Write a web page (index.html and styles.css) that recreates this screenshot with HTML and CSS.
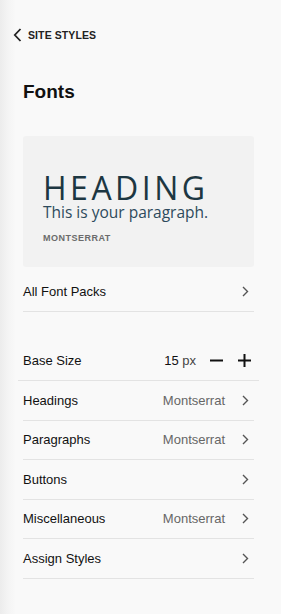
FILE: index.html
```html
<!DOCTYPE html>
<html>
<head>
<meta charset="utf-8">
<link rel="stylesheet" href="styles.css">
</head>
<body>
<div class="panel">
  <div class="back">
    <svg class="back-icon" width="9" height="14" viewBox="0 0 9 14"><path d="M7.5 1 L1.8 7 L7.5 13" fill="none" stroke="#222" stroke-width="1.8"/></svg>
    <span>SITE STYLES</span>
  </div>
  <h1 class="title">Fonts</h1>
  <div class="preview">
    <div class="pv-heading">HEADING</div>
    <div class="pv-para">This is your paragraph.</div>
    <div class="pv-label">MONTSERRAT</div>
  </div>
  <div class="row packs-row">
    <span class="label">All Font Packs</span>
    <span class="right"><svg class="chev" width="7" height="11" viewBox="0 0 7 11"><path d="M1 1 L5.5 5.5 L1 10" fill="none" stroke="#555" stroke-width="1.4"/></svg></span>
  </div>
  <div class="row size-row">
    <span class="label">Base Size</span>
    <span class="right">
      <span class="size"><span class="num">15</span> <span class="unit">px</span></span>
      <svg class="op" width="13" height="13" viewBox="0 0 13 13"><path d="M0 6.5 H13" stroke="#111" stroke-width="2"/></svg>
      <svg class="op op-plus" width="13" height="13" viewBox="0 0 13 13"><path d="M0 6.5 H13 M6.5 0 V13" stroke="#111" stroke-width="2"/></svg>
    </span>
  </div>
  <div class="row">
    <span class="label">Headings</span>
    <span class="right"><span class="val">Montserrat</span><svg class="chev" width="7" height="11" viewBox="0 0 7 11"><path d="M1 1 L5.5 5.5 L1 10" fill="none" stroke="#555" stroke-width="1.4"/></svg></span>
  </div>
  <div class="row">
    <span class="label">Paragraphs</span>
    <span class="right"><span class="val">Montserrat</span><svg class="chev" width="7" height="11" viewBox="0 0 7 11"><path d="M1 1 L5.5 5.5 L1 10" fill="none" stroke="#555" stroke-width="1.4"/></svg></span>
  </div>
  <div class="row">
    <span class="label">Buttons</span>
    <span class="right"><svg class="chev" width="7" height="11" viewBox="0 0 7 11"><path d="M1 1 L5.5 5.5 L1 10" fill="none" stroke="#555" stroke-width="1.4"/></svg></span>
  </div>
  <div class="row">
    <span class="label">Miscellaneous</span>
    <span class="right"><span class="val">Montserrat</span><svg class="chev" width="7" height="11" viewBox="0 0 7 11"><path d="M1 1 L5.5 5.5 L1 10" fill="none" stroke="#555" stroke-width="1.4"/></svg></span>
  </div>
  <div class="row">
    <span class="label">Assign Styles</span>
    <span class="right"><svg class="chev" width="7" height="11" viewBox="0 0 7 11"><path d="M1 1 L5.5 5.5 L1 10" fill="none" stroke="#555" stroke-width="1.4"/></svg></span>
  </div>
</div>
</body>
</html>
```
FILE: styles.css
```css
html, body {
  margin: 0;
  padding: 0;
}
body {
  width: 281px;
  height: 614px;
  background: linear-gradient(to right, #ececec 0px, #f4f4f4 8px, #f9f9f9 16px, #f9f9f9 100%);
  font-family: "Liberation Sans", Arial, sans-serif;
  color: #111;
  overflow: hidden;
}
.panel {
  padding: 0 27px 0 23px;
}
.back {
  display: flex;
  align-items: center;
  gap: 6px;
  margin-left: -10px;
  padding-top: 28px;
  height: 14px;
  font-size: 10.5px;
  font-weight: bold;
  letter-spacing: 0.1px;
  color: #222;
}
.back-icon {
  display: block;
}
.title {
  margin: 0;
  margin-top: 38px;
  font-size: 19px;
  line-height: 24px;
  font-weight: bold;
  color: #111;
}
.preview {
  margin-top: 32px;
  height: 131px;
  background: #f2f2f2;
  border-radius: 3px;
  padding: 0 20px;
  box-sizing: border-box;
  display: flex;
  flex-direction: column;
  justify-content: flex-start;
}
.pv-heading {
  margin-top: 35px;
  font-family: "Open Sans", sans-serif;
  font-size: 32px;
  line-height: 34px;
  letter-spacing: 3.5px;
  color: #1d3742;
  font-weight: 500;
  white-space: nowrap;
}
.pv-para {
  font-family: "Open Sans", sans-serif;
  font-size: 15.5px;
  line-height: 15px;
  color: #2d4a5c;
  margin-top: 0;
  white-space: nowrap;
}
.pv-label {
  margin-top: 13px;
  font-size: 9px;
  line-height: 11px;
  font-weight: bold;
  letter-spacing: 0.5px;
  color: #6b6b6b;
}
.row {
  display: flex;
  align-items: center;
  justify-content: space-between;
  height: 38.5px;
  border-bottom: 1px solid #e3e3e3;
  font-size: 13px;
}
.packs-row {
  margin-top: 5px;
}
.size-row {
  margin-top: 30px;
  margin-left: -5px;
  margin-right: -5px;
  padding: 0 8px 0 5px;
}
.right {
  display: flex;
  align-items: center;
}
.val {
  color: #666;
  margin-right: 17px;
}
.chev {
  display: block;
  margin-right: 5px;
}
.size {
  margin-right: 14px;
}
.num {
  color: #111;
}
.unit {
  color: #444;
}
.op {
  display: block;
}
.op-plus {
  margin-left: 15px;
}
```
